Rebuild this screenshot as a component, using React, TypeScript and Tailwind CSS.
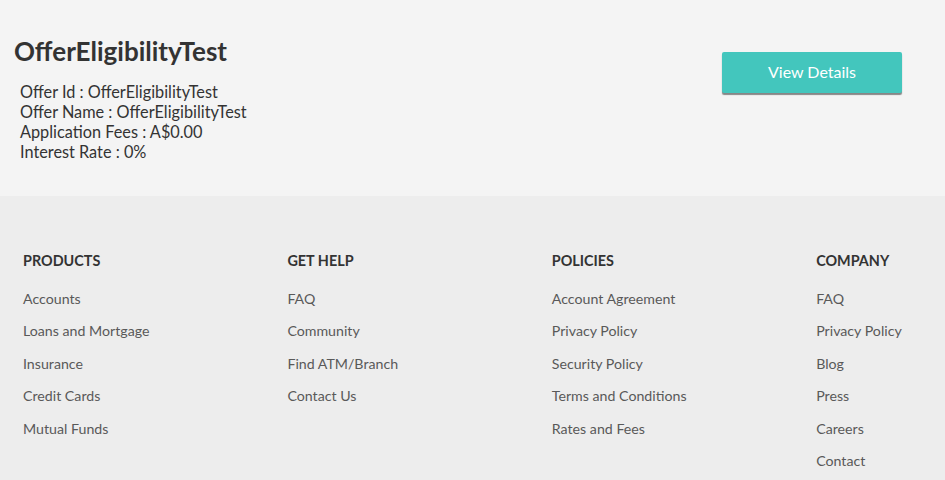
const footerColumns = [
  {
    title: "PRODUCTS",
    links: ["Accounts", "Loans and Mortgage", "Insurance", "Credit Cards", "Mutual Funds"],
  },
  {
    title: "GET HELP",
    links: ["FAQ", "Community", "Find ATM/Branch", "Contact Us"],
  },
  {
    title: "POLICIES",
    links: ["Account Agreement", "Privacy Policy", "Security Policy", "Terms and Conditions", "Rates and Fees"],
  },
  {
    title: "COMPANY",
    links: ["FAQ", "Privacy Policy", "Blog", "Press", "Careers", "Contact"],
  },
];

export default function App() {
  return (
    <div className="w-[945px] h-[480px] overflow-hidden font-['Lato','Liberation_Sans',sans-serif]">
      {/* Offer card */}
      <div className="h-[196px] bg-[#f4f4f4] flex justify-between">
        <div className="pl-[14px] pt-[35px]">
          <h1 className="text-[26px] leading-[32px] font-bold text-[#333]">OfferEligibilityTest</h1>
          <div className="mt-[15px] pl-[6px] text-[16.3px] leading-[20px] text-[#333]">
            <p>Offer Id : OfferEligibilityTest</p>
            <p>Offer Name : OfferEligibilityTest</p>
            <p>Application Fees : A$0.00</p>
            <p>Interest Rate : 0%</p>
          </div>
        </div>
        <div className="pt-[52px] pr-[43px]">
          <button className="w-[180px] h-[41px] pb-[2px] bg-[#43c6bd] text-white text-[16px] rounded-[2px] shadow-[0_2px_1px_rgba(0,0,0,0.45)]">
            View Details
          </button>
        </div>
      </div>

      {/* Footer */}
      <div className="h-[284px] bg-[#ededed] flex pl-[23px] pt-[55px]">
        {footerColumns.map((col) => (
          <div key={col.title} className="w-[264.4px] shrink-0">
            <h3 className="text-[14.4px] leading-[20px] font-bold text-[#333]">{col.title}</h3>
            <ul className="mt-[12px]">
              {col.links.map((link) => (
                <li key={link} className="text-[14.2px] leading-[32.4px] text-[#595959]">
                  {link}
                </li>
              ))}
            </ul>
          </div>
        ))}
      </div>
    </div>
  );
}
